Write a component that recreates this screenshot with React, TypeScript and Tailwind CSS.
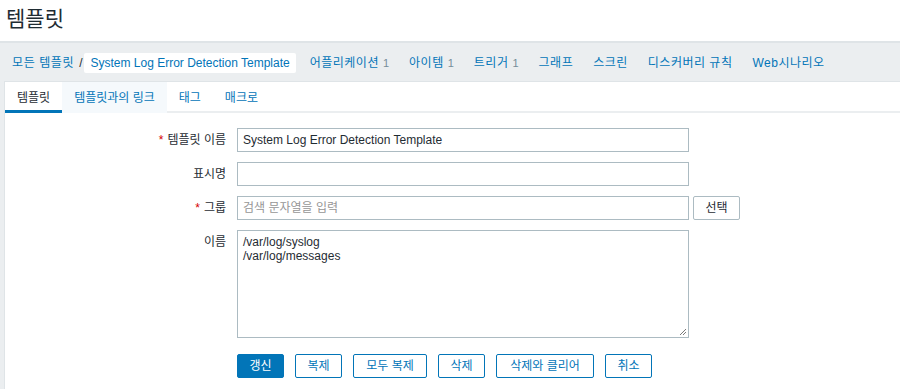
import React from "react";

const font = { fontFamily: '"Liberation Sans", Arial, "Noto Sans CJK KR", sans-serif' };

const navItems = [
  { label: "어플리케이션", count: "1" },
  { label: "아이템", count: "1" },
  { label: "트리거", count: "1" },
  { label: "그래프" },
  { label: "스크린" },
  { label: "디스커버리 규칙" },
  { label: "Web시나리오" },
];

const tabs = ["템플릿", "템플릿과의 링크", "태그", "매크로"];

function Label({ text, required }: { text: string; required?: boolean }) {
  return (
    <div className="w-[221px] shrink-0 text-right text-[12px] text-[#1f2c33] leading-[24px]">
      {required && <span className="text-[#d40000] mr-[4px]">*</span>}
      {text}
    </div>
  );
}

function Btn({ text, primary, w }: { text: string; primary?: boolean; w: string }) {
  return (
    <button
      className={`${w} h-[24px] rounded-[2px] text-[12px] border ${
        primary ? "bg-[#0275b8] border-[#0275b8] text-white" : "bg-white border-[#0275b8] text-[#0275b8]"
      }`}
    >
      {text}
    </button>
  );
}

export default function App() {
  return (
    <div className="w-[900px] h-[389px] overflow-hidden bg-white text-[#1f2c33]" style={font}>
      {/* title */}
      <div className="h-[41px] pl-[6px] pt-[4px]">
        <h1 className="text-[21px] leading-[30px] font-normal">템플릿</h1>
      </div>

      <div className="bg-[#ebeef0] border-t-[2px] border-[#dfe4e7]">
        {/* breadcrumb nav */}
        <div className="h-[38px] flex items-center text-[12px] pl-[12px] pt-[1px]">
          <span className="text-[#0275b8] tracking-[0.6px]">모든 템플릿</span>
          <span className="ml-[5px] mr-[2px] text-[#1f2c33]">/</span>
          <span className="bg-white rounded-[2px] h-[20px] flex items-center px-[6px] text-[#0275b8]">
            System Log Error Detection Template
          </span>
          <div className="flex items-center gap-[20px] ml-[14px]">
            {navItems.map((n) => (
              <span key={n.label} className="text-[#0275b8] tracking-[0.5px]">
                {n.label}
                {n.count && <span className="text-[#768d99] text-[11px] ml-[4px] tracking-normal">{n.count}</span>}
              </span>
            ))}
          </div>
        </div>

        {/* tabs + form */}
        <div className="ml-[4px] bg-white border-t border-l border-[#dfe4e7] h-[310px]">
          <div className="flex h-[31px] border-b-[2px] border-[#ebeef0] text-[12px]">
            {tabs.map((t, i) => (
              <div
                key={t}
                className={`h-[31px] flex items-center px-[12px] ${
                  i === 0
                    ? "text-[#1f2c33] border-b-[3px] border-[#0275b8] pt-[3px]"
                    : i === 1
                    ? "text-[#0275b8] bg-[#f5f9fc]"
                    : "text-[#0275b8]"
                }`}
              >
                {t}
              </div>
            ))}
          </div>

          <div className="pt-[15px] flex flex-col gap-[10px]">
            <div className="flex gap-[11px]">
              <Label text="템플릿 이름" required />
              <div className="w-[452px] h-[24px] border border-[#acbbc2] px-[5px] flex items-center text-[12px]">
                System Log Error Detection Template
              </div>
            </div>
            <div className="flex gap-[11px]">
              <Label text="표시명" />
              <div className="w-[452px] h-[24px] border border-[#acbbc2]" />
            </div>
            <div className="flex gap-[11px]">
              <Label text="그룹" required />
              <div className="flex gap-[4px]">
                <div className="w-[452px] h-[24px] border border-[#acbbc2] px-[5px] flex items-center text-[12px] text-[#969696]">
                  검색 문자열을 입력
                </div>
                <button className="w-[47px] h-[24px] border border-[#acbbc2] rounded-[2px] bg-white text-[12px] text-[#1f2c33]">
                  선택
                </button>
              </div>
            </div>
            <div className="flex gap-[11px]">
              <Label text="이름" />
              <div className="relative w-[452px] h-[108px] border border-[#acbbc2] px-[5px] pt-[4px] text-[12px] leading-[14px]">
                <div>/var/log/syslog</div>
                <div>/var/log/messages</div>
                <svg className="absolute right-[1px] bottom-[1px]" width="8" height="8" viewBox="0 0 8 8">
                  <path d="M7 1L1 7M7 4L4 7" stroke="#7a7a7a" strokeWidth="1" />
                </svg>
              </div>
            </div>
            <div className="flex gap-[11px] pt-[6px]">
              <div className="w-[221px] shrink-0" />
              <div className="flex gap-[11px]">
                <Btn text="갱신" primary w="w-[47px]" />
                <Btn text="복제" w="w-[47px]" />
                <Btn text="모두 복제" w="w-[74px]" />
                <Btn text="삭제" w="w-[47px]" />
                <Btn text="삭제와 클리어" w="w-[98px]" />
                <Btn text="취소" w="w-[47px]" />
              </div>
            </div>
          </div>
        </div>
      </div>
    </div>
  );
}
